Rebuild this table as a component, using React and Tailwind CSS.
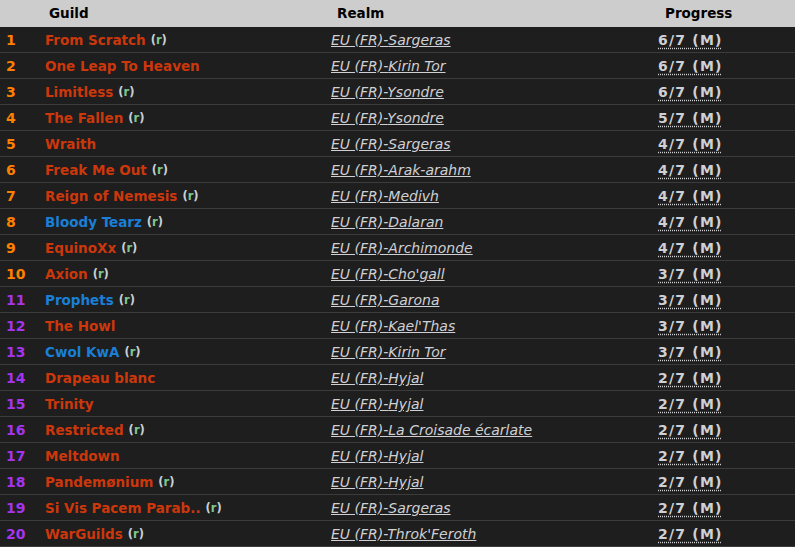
import React from 'react';

const ORANGE = 'text-[#ff8000]';
const PURPLE = 'text-[#a335ee]';
const RED = 'text-[#cc370c]';
const BLUE = 'text-[#1a7fd6]';

const guilds = [
  { name: 'From Scratch', r: true, realm: 'Sargeras', prog: '6/7' },
  { name: 'One Leap To Heaven', r: false, realm: 'Kirin Tor', prog: '6/7' },
  { name: 'Limitless', r: true, realm: 'Ysondre', prog: '6/7' },
  { name: 'The Fallen', r: true, realm: 'Ysondre', prog: '5/7' },
  { name: 'Wraith', r: false, realm: 'Sargeras', prog: '4/7' },
  { name: 'Freak Me Out', r: true, realm: 'Arak-arahm', prog: '4/7' },
  { name: 'Reign of Nemesis', r: true, realm: 'Medivh', prog: '4/7' },
  { name: 'Bloody Tearz', r: true, realm: 'Dalaran', prog: '4/7', blue: true },
  { name: 'EquinoXx', r: true, realm: 'Archimonde', prog: '4/7' },
  { name: 'Axion', r: true, realm: "Cho'gall", prog: '3/7' },
  { name: 'Prophets', r: true, realm: 'Garona', prog: '3/7', blue: true },
  { name: 'The Howl', r: false, realm: "Kael'Thas", prog: '3/7' },
  { name: 'Cwol KwA', r: true, realm: 'Kirin Tor', prog: '3/7', blue: true },
  { name: 'Drapeau blanc', r: false, realm: 'Hyjal', prog: '2/7' },
  { name: 'Trinity', r: false, realm: 'Hyjal', prog: '2/7' },
  { name: 'Restricted', r: true, realm: 'La Croisade écarlate', prog: '2/7' },
  { name: 'Meltdown', r: false, realm: 'Hyjal', prog: '2/7' },
  { name: 'Pandemønium', r: true, realm: 'Hyjal', prog: '2/7' },
  { name: 'Si Vis Pacem Parab..', r: true, realm: 'Sargeras', prog: '2/7' },
  { name: 'WarGuilds', r: true, realm: "Throk'Feroth", prog: '2/7' },
];

const App = () => {
  return (
    <div className="w-[795px] h-[547px] bg-[#1e1e1e] overflow-hidden font-['DejaVu_Sans',Verdana,sans-serif] text-[14px]">
      {/* header */}
      <div className="flex h-[27px] items-center bg-[#cdcdcd] text-black font-bold text-[13.5px]">
        <div className="w-[45px]"></div>
        <div className="w-[286px] pl-[4px]">Guild</div>
        <div className="w-[327px] pl-[6px]">Realm</div>
        <div className="pl-[7px]">Progress</div>
      </div>

      {guilds.map((g, i) => (
        <div key={i} className="flex h-[26px] items-center pt-[2px] border-b border-[#3c3c3c]">
          <div className={`w-[45px] pl-[6px] font-bold ${i < 10 ? ORANGE : PURPLE}`}>{i + 1}</div>
          <div className="w-[286px] flex items-center">
            <span className={`font-bold text-[13.5px] ${g.blue ? BLUE : RED}`}>{g.name}</span>
            {g.r && (
              <span className="ml-[5px] text-[11.5px] font-bold text-[#c8d0d8]">
                (<span className="text-[#7ec890]">r</span>)
              </span>
            )}
          </div>
          <div className="w-[327px]">
            <span className="italic underline text-[#d0d0d4]">EU (FR)-{g.realm}</span>
          </div>
          <div>
            <span className="font-bold text-[#d0d0d4] underline decoration-dotted underline-offset-[3px] tracking-[1.2px]">
              {g.prog} (M)
            </span>
          </div>
        </div>
      ))}
    </div>
  );
};

export default App;
